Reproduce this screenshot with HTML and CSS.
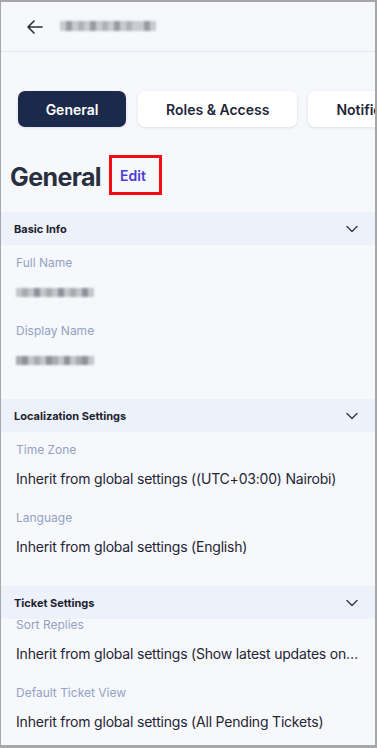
FILE: index.html
```html
<!DOCTYPE html>
<html lang="en">
<head>
    <meta charset="UTF-8">
    <meta name="viewport" content="width=device-width, initial-scale=1.0">
    <title>User Profile: General</title>
    <link rel="stylesheet" href="styles.css">
</head>
<body>
    <div class="frame">
        <header class="topbar">
            <button class="back" aria-label="Back">
                <svg width="16" height="14" viewBox="0 0 16 14" fill="none" stroke="#2a2e36" stroke-width="1.6" stroke-linecap="round" stroke-linejoin="round">
                    <path d="M15 7H1.5M7 1L1 7l6 6"/>
                </svg>
            </button>
            <div class="blur title-blur">
                <i></i><i class="d"></i><i></i><i class="m"></i><i></i><i class="d"></i><i></i><i class="m"></i><i></i><i class="d"></i><i></i><i class="m"></i><i></i><i></i><i class="d"></i><i></i>
            </div>
        </header>

        <nav class="tabs">
            <button class="tab active">General</button>
            <button class="tab">Roles &amp; Access</button>
            <button class="tab">Notifications</button>
        </nav>

        <div class="page-title">
            <h1>General</h1>
            <a class="edit" href="#">Edit</a>
        </div>

        <section class="section">
            <div class="section-head">
                <span>Basic Info</span>
                <svg class="chev" width="12" height="8" viewBox="0 0 12 8" fill="none" stroke="#394157" stroke-width="1.5" stroke-linecap="round" stroke-linejoin="round"><path d="M1 1.5l5 5 5-5"/></svg>
            </div>
            <div class="section-body">
                <div class="field">
                    <div class="label">Full Name</div>
                    <div class="blur value-blur">
                        <i></i><i class="m"></i><i></i><i class="d"></i><i></i><i class="m"></i><i></i><i class="d"></i><i></i><i class="m"></i><i></i><i class="d"></i><i></i>
                    </div>
                </div>
                <div class="field">
                    <div class="label">Display Name</div>
                    <div class="blur value-blur">
                        <i class="m"></i><i class="d"></i><i></i><i class="m"></i><i></i><i class="d"></i><i class="m"></i><i></i><i class="d"></i><i></i><i class="m"></i><i class="d"></i><i></i>
                    </div>
                </div>
            </div>
        </section>

        <section class="section">
            <div class="section-head">
                <span>Localization Settings</span>
                <svg class="chev" width="12" height="8" viewBox="0 0 12 8" fill="none" stroke="#394157" stroke-width="1.5" stroke-linecap="round" stroke-linejoin="round"><path d="M1 1.5l5 5 5-5"/></svg>
            </div>
            <div class="section-body">
                <div class="field">
                    <div class="label">Time Zone</div>
                    <div class="value">Inherit from global settings ((UTC+03:00) Nairobi)</div>
                </div>
                <div class="field">
                    <div class="label">Language</div>
                    <div class="value">Inherit from global settings (English)</div>
                </div>
            </div>
        </section>

        <section class="section">
            <div class="section-head">
                <span>Ticket Settings</span>
                <svg class="chev" width="12" height="8" viewBox="0 0 12 8" fill="none" stroke="#394157" stroke-width="1.5" stroke-linecap="round" stroke-linejoin="round"><path d="M1 1.5l5 5 5-5"/></svg>
            </div>
            <div class="section-body tucked">
                <div class="field">
                    <div class="label">Sort Replies</div>
                    <div class="value">Inherit from global settings (Show latest updates on top)</div>
                </div>
                <div class="field">
                    <div class="label">Default Ticket View</div>
                    <div class="value">Inherit from global settings (All Pending Tickets)</div>
                </div>
            </div>
        </section>
    </div>
</body>
</html>
```

FILE: styles.css
```css
body { margin: 0; font-family: Inter, "Noto Sans", sans-serif; background: #fff; }
.frame { box-sizing: border-box; width: 377px; height: 748px; overflow: hidden; background: #f6f8fc; border-style: solid; border-color: #a7a7a9; border-width: 2px 2px 3px 1px; }

.topbar { height: 49px; display: flex; align-items: center; gap: 16px; padding: 0 0 0 25px; border-bottom: 1px solid #dce7f2; }
.back { border: none; background: none; padding: 0; display: flex; width: 18px; justify-content: center; }
.blur { display: flex; align-items: center; filter: blur(0.8px); }
.blur i { width: 6px; height: 10px; background: #c4c6cc; }
.blur i.m { background: #a9abb2; }
.blur i.d { background: #8f929a; }
.title-blur { width: 97px; margin-bottom: 2px; opacity: 0.9; }
.title-blur i { width: 6px; height: 10px; }
.value-blur { height: 20px; }
.value-blur i { width: 6px; height: 9px; }

.tabs { display: flex; gap: 12px; padding: 39px 0 0 17px; white-space: nowrap; }
.tab { flex: none; height: 36px; padding: 0 28px; border: none; border-radius: 7px; background: #fff; color: #1e2638; font-family: Inter, sans-serif; font-size: 14px; font-weight: 600; box-shadow: 0 1px 3px rgba(30, 40, 70, 0.12); }
.tab.active { background: #1b2a4a; color: #fff; width: 108px; padding: 0; }
.tab:last-child { margin-left: -1px; }

.page-title { display: flex; align-items: center; gap: 8px; padding: 30px 0 0 9px; height: 40px; }
.page-title h1 { margin: 0; font-size: 25px; font-weight: 700; color: #283040; letter-spacing: -0.6px; }
.edit { display: flex; align-items: center; height: 34px; padding: 0 13px 0 8px; border: 3px solid #f30c12; color: #4a3bd6; font-size: 14px; font-weight: 600; text-decoration: none; margin-top: -4px; }

.page-title + .section { margin-top: 15px; }
.section-head { height: 33px; display: flex; align-items: center; justify-content: space-between; padding: 0 17px 0 13px; background: #edf1fa; font-size: 11px; font-weight: 700; color: #1d2230; }
.section-body { padding: 9px 16px 9px 15px; }
.section-body.tucked { margin-top: -3px; padding-top: 0; }
.field { margin-bottom: 20px; }
.label { font-size: 12px; line-height: 18px; color: #93a2c2; margin-bottom: 10px; }
.value { font-size: 14px; line-height: 20px; color: #1f2533; white-space: nowrap; overflow: hidden; text-overflow: ellipsis; letter-spacing: -0.2px; }
```
